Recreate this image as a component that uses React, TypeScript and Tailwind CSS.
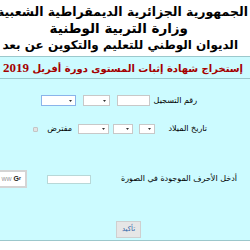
import React from 'react';

const Arrow = () => (
  <svg width="3" height="2" viewBox="0 0 3 2" className="absolute right-[3px] top-1/2 -translate-y-1/2">
    <path d="M0 0h3L1.5 2z" fill="#333" />
  </svg>
);

const Select = ({ w, focused = false }: { w: string; focused?: boolean }) => (
  <div
    className={`relative shrink-0 h-full bg-white border ${focused ? 'border-[#8ab4ea]' : 'border-[#c8c8c8]'} ${w}`}
  >
    <Arrow />
  </div>
);

const App: React.FC = () => {
  return (
    <div
      dir="rtl"
      className="w-[250px] h-[250px] overflow-hidden bg-white font-['DejaVu_Sans',sans-serif] text-black"
    >
      {/* Header */}
      <div className="pt-[3px] font-bold text-[12.5px] leading-[17px]">
        <div className="flex whitespace-nowrap pr-[2px]">
          <span>الجمهورية الجزائرية الديمقراطية الشعبية</span>
        </div>
        <div className="flex whitespace-nowrap pr-[62px] text-[13.5px]">
          <span>وزارة التربية الوطنية</span>
        </div>
        <div className="flex whitespace-nowrap pr-[12px] text-[12px]">
          <span>الديوان الوطني للتعليم والتكوين عن بعد</span>
        </div>
      </div>

      {/* Title bar */}
      <div className="mt-[2px] h-[23px] border-y border-[#9cc8cc] bg-[#ccfbff] flex items-center pr-[7px] whitespace-nowrap text-[#a40000] font-bold text-[10px]">
        <span>
          إستخراج شهادة إثبات المستوى دورة أفريل{' '}
          <span className="font-['Liberation_Serif',serif] text-[13px]">2019</span>
        </span>
      </div>

      {/* Form */}
      <div className="h-[162px] bg-[#ccfbff] border-b border-[#9cc8cc] flex flex-col text-[8px]">
        {/* Row 1 */}
        <div className="mt-[16px] h-[11px] flex items-center pr-[53px]">
          <span className="w-[40px] shrink-0 whitespace-nowrap">رقم التسجيل</span>
          <div className="mr-[7px] w-[33px] h-full shrink-0 bg-white border border-[#c8c8c8]" />
          <div className="mr-[7px] h-full flex">
            <Select w="w-[27px]" />
          </div>
          <div className="mr-[7px] h-full flex">
            <Select w="w-[35px]" focused />
          </div>
        </div>

        {/* Row 2 */}
        <div className="mt-[18px] h-[10px] flex items-center pr-[43px]">
          <span className="w-[41px] shrink-0 whitespace-nowrap">تاريخ الميلاد</span>
          <div className="mr-[11px] h-full flex">
            <Select w="w-[16px]" />
          </div>
          <div className="mr-[6px] h-full flex">
            <Select w="w-[20px]" />
          </div>
          <div className="mr-[4px] h-full flex">
            <Select w="w-[31px]" />
          </div>
          <span className="mr-[6px] w-[22px] shrink-0 whitespace-nowrap">مفترض</span>
          <div className="mr-[12px] w-[5px] h-[5px] shrink-0 rounded-[1px] bg-[#e2e2e2] border border-[#c4c4c4]" />
        </div>

        {/* Row 3 */}
        <div className="mt-[36px] h-[18px] flex items-center pr-[13px]">
          <span className="w-[111px] shrink-0 whitespace-nowrap">أدخل الأحرف الموجودة في الصورة</span>
          <div className="mr-[35px] w-[44px] h-[9px] shrink-0 bg-white border border-[#b8d8d8]" />
          <div
            dir="ltr"
            className="mr-[20px] w-[40px] h-[18px] shrink-0 bg-white border-2 border-[#d4d4d4] flex items-center justify-end pr-[4px] font-['Liberation_Sans',sans-serif] text-[7px] font-bold text-[#222]"
          >
            <span className="text-[#999] font-normal mr-[2px]">ww</span>G<span className="text-[5px]">r</span>
          </div>
        </div>

        {/* Submit */}
        <div className="mt-[33px] flex justify-center pl-[7px]">
          <div className="w-[25px] h-[17px] bg-[#e6e6e6] border border-[#cfcfcf] flex items-center justify-center text-[7px] text-[#2f64a8]">
            تأكيد
          </div>
        </div>
      </div>
    </div>
  );
};

export default App;
